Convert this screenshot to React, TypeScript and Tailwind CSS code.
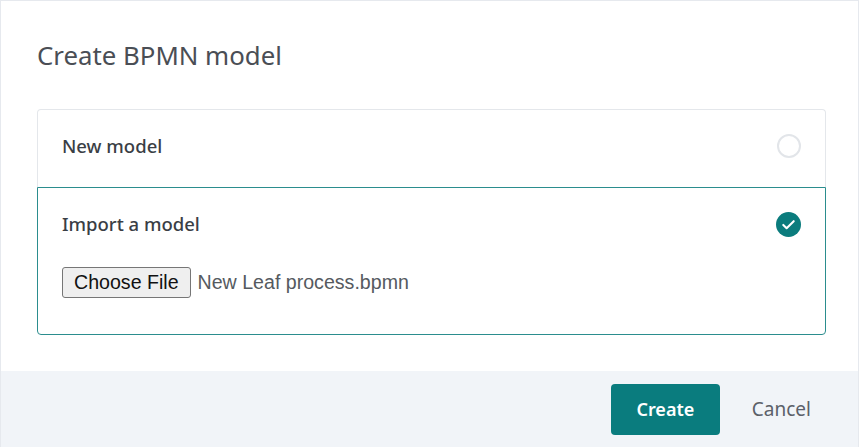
import { useState } from "react";

const options = [
  { id: "new", label: "New model" },
  { id: "import", label: "Import a model" },
];

const CheckBadge = () => (
  <svg width="25" height="25" viewBox="0 0 24 24">
    <circle cx="12" cy="12" r="12" fill="#0b7c7d" />
    <path
      d="M7 12.4l3.2 3.1L17 8.8"
      fill="none"
      stroke="#fff"
      strokeWidth="2"
      strokeLinecap="round"
      strokeLinejoin="round"
    />
  </svg>
);

const App = () => {
  const [selected, setSelected] = useState("import");

  return (
    <div
      className="w-[861px] h-[447px] bg-white overflow-hidden"
      style={{ fontFamily: '"Noto Sans", "Open Sans", sans-serif' }}
    >
      <div className="w-[859px] h-[447px] flex flex-col border border-b-0 border-[#e6e9ee]">
        <div className="flex-1 px-9 pt-[38px]">
          <h1 className="text-[25.8px] leading-8 text-[#4a4e55]">Create BPMN model</h1>

          <div className="mt-[38px] w-[789px] flex flex-col">
            {options.map((opt, i) => {
              const active = selected === opt.id;
              return (
                <div
                  key={opt.id}
                  onClick={() => setSelected(opt.id)}
                  className={
                    (active
                      ? "border-[#2b8d8e] "
                      : "border-[#e4e7eb] border-b-0 ") +
                    "border px-[24px] cursor-pointer " +
                    (i === 0 ? "rounded-t-[4px] h-[78px] " : "rounded-b-[4px] h-[148px] ")
                  }
                >
                  <div className="flex items-center justify-between h-[72px]">
                    <span className="text-[18.5px] font-medium text-[#3a3e45]">{opt.label}</span>
                    {active ? (
                      <CheckBadge />
                    ) : (
                      <span className="w-[24px] h-[24px] rounded-full border-2 border-[#e2e5e9]" />
                    )}
                  </div>
                  {opt.id === "import" && (
                    <div
                      className="flex items-center gap-[7px] mt-[7px]"
                      style={{ fontFamily: '"Liberation Sans", Arial, sans-serif' }}
                    >
                      <span className="h-[31px] px-[11px] flex items-center bg-[#efefef] border border-[#767676] rounded-[3px] text-[19.6px] text-[#111]">
                        Choose File
                      </span>
                      <span className="text-[19.6px] text-[#555a60]">New Leaf process.bpmn</span>
                    </div>
                  )}
                </div>
              );
            })}
          </div>
        </div>

        <div className="h-[76px] bg-[#f1f4f8] flex items-center justify-end pr-[47px] gap-[32px]">
          <button className="w-[109px] h-[51px] rounded-[4px] bg-[#0a7c7e] text-white text-[18px] font-semibold">
            Create
          </button>
          <button className="text-[19px] text-[#5b6069]">Cancel</button>
        </div>
      </div>
    </div>
  );
};

export default App;
